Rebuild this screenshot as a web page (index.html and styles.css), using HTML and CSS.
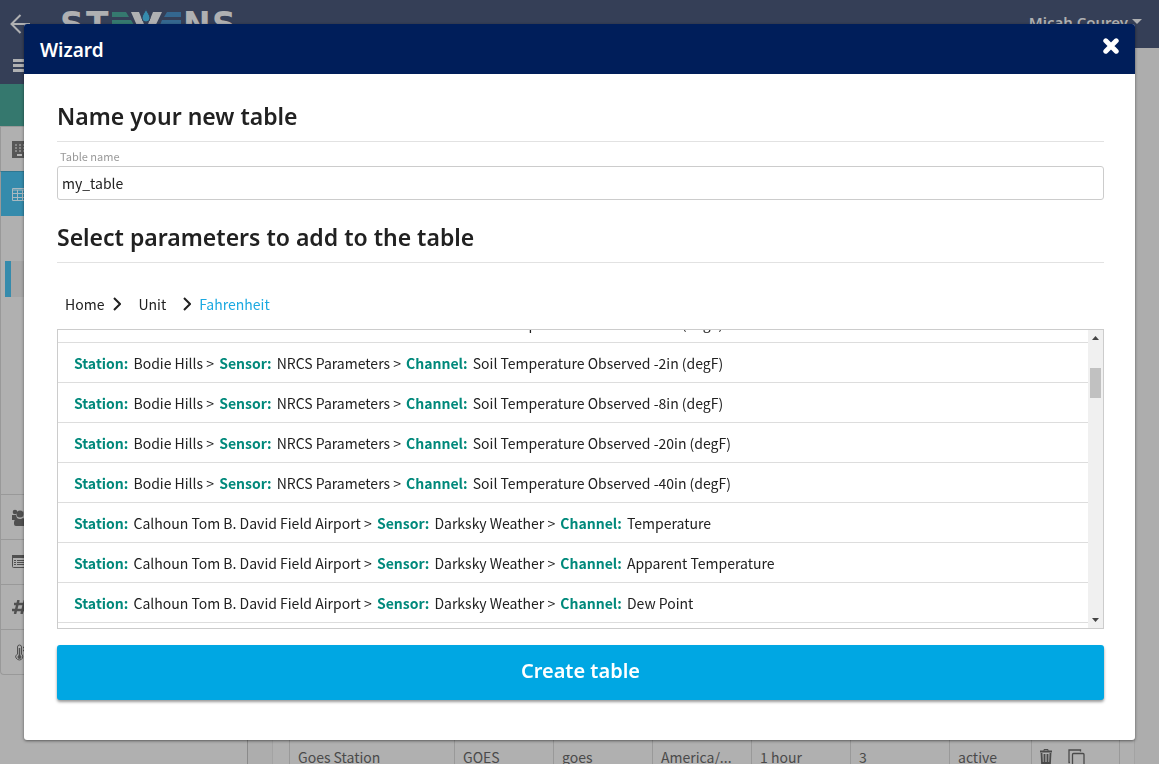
FILE: index.html
```html
<!DOCTYPE html>
<html lang="en">
<head>
<meta charset="utf-8">
<title>Wizard</title>
<link rel="stylesheet" href="styles.css">
</head>
<body>
<div class="app">
  <header class="topbar">
    <a class="back" href="#" aria-label="Back">
      <svg width="20" height="20" viewBox="0 0 20 20" fill="none" stroke="currentColor" stroke-width="2"><path d="M20 10H1M10.500 1L1.500 10l9 9"/></svg>
    </a>
    <svg class="logo" width="178" height="32" viewBox="0 0 178 32" role="img" aria-label="Stevens">
      <g class="logo-text">
        <text x="0" y="28">S</text><text x="26" y="28">T</text><text x="123" y="28">N</text><text x="152" y="28">S</text>
      </g>
      <path d="M71 4h8l7 17 7-17h9L90 29h-8z" fill="#afb0b2"/>
      <path d="M52 4h14l3 5H52zM52 12h19l3 5H52z" fill="#35796f"/>
      <path d="M107 4h14v5h-17zM102 12h19v5h-21z" fill="#34678f"/>
      <path d="M86 1c1 3 4 6 4 9a4 4 0 0 1-8 0c0-3 3-6 4-9z" fill="#358bad" stroke="#353f57" stroke-width="1"/>
    </svg>
    <button class="user" type="button">Micah Courey<svg width="10" height="6" viewBox="0 0 10 6"><path d="M0 0h10L5 5z" fill="currentColor"/></svg></button>
  </header>
  <div class="workspace">
    <nav class="sidebar" aria-label="Main">
      <button class="side-menu" type="button" aria-label="Menu"><svg width="17" height="14" viewBox="0 0 17 14"><path d="M0 0h17v3H0zM0 5h17v3H0zM0 10h17v3H0z" fill="currentColor"/></svg></button>
      <div class="side-title"></div>
      <a class="side-item" href="#" aria-label="Stations"><svg width="16" height="17" viewBox="0 0 16 17"><path d="M0 0h16v17H0z" fill="#575757"/><path d="M3 3h2v2H3zM7 3h2v2H7zM11 3h2v2h-2zM3 6h2v2H3zM7 6h2v2H7zM11 6h2v2h-2zM3 9h2v2H3zM7 9h2v2H7zM11 9h2v2h-2z" fill="#888"/><path d="M5 13h5v2H5z" fill="#b5b5b5"/></svg></a>
      <a class="side-item active" href="#" aria-label="Tables"><svg width="18" height="13" viewBox="0 0 18 13" fill="none" stroke="#a9b9c0"><path d="M.5.5h17v12H.5zM0 2h18M0 5.500h18M0 9.500h18M5.500 2v11M10.500 2v11M14.500 2v11"/></svg></a>
      <div class="submenu"><a class="sub-item" href="#" aria-label="Current table"></a></div>
      <a class="side-item" href="#" aria-label="Users"><svg width="20" height="17" viewBox="0 0 20 17" fill="#505050"><circle cx="3" cy="3" r="2.300"/><circle cx="8" cy="5" r="3.500"/><circle cx="14" cy="3" r="2.300"/><path d="M0 6h4l1 3-2 2H0zM12 6h5v4h-5zM2 13q1-4 3-4 3 2 6 0 3 1 3 4v2q0 2-2 2H4q-2 0-2-2z"/></svg></a>
      <a class="side-item" href="#" aria-label="Reports"><svg width="20" height="14" viewBox="0 0 20 14" fill="none" stroke="#505050"><rect x=".5" y=".5" width="19" height="12" rx="1"/><path d="M2 5.500h2M5 5.500h13M2 7.500h2M5 7.500h13M2 9.500h2M5 9.500h13"/><path d="M0 1.500h20" stroke-width="3"/></svg></a>
      <a class="side-item" href="#" aria-label="Channels"><svg width="16" height="14" viewBox="0 0 16 14" fill="none" stroke="#505050" stroke-width="2.500"><path d="M6.500 0L3 14M13 0L9.500 14M2 4h14M0 10h14"/></svg></a>
      <a class="side-item" href="#" aria-label="Temperature"><svg width="16" height="17" viewBox="-2 0 16 17" fill="none" stroke="#505050"><path d="M3.500 10V3q0-2 2-2t2 2v7q2 2 1 4t-3 2-3.500-2 1.500-4z"/><path d="M5.500 4v8M9 3.500h4M9 6.500h4" stroke-width="1.500"/><circle cx="5.500" cy="13" r="1.500" fill="#505050"/></svg></a>
    </nav>
    <main class="content">
      <div class="panel">
        <table class="stations">
          <colgroup><col class="c-name"><col class="c-mid"><col class="c-mid"><col class="c-mid"><col class="c-mid"><col class="c-mid"><col class="c-state"><col class="c-act"></colgroup>
          <tbody><tr>
            <td>Goes Station</td><td>GOES</td><td>goes</td><td>America/...</td><td>1 hour</td><td>3</td><td>active</td>
            <td><div class="actions">
              <button type="button" aria-label="Delete"><svg width="12" height="15" viewBox="0 0 12 15" fill="none" stroke="currentColor"><path d="M0 2.500h12" stroke-width="2"/><path d="M4 2V.5h4V2"/><path d="M1.500 4l.5 10h8l.5-10M4.500 5v8M7.500 5v8" stroke-width="1.800"/></svg></button>
              <button type="button" aria-label="Copy"><svg width="17" height="18" viewBox="0 0 17 18" fill="none" stroke="currentColor" stroke-width="1.300"><rect x="4.500" y="4.500" width="11.500" height="13" rx="1"/><path d="M2 13.500H1V1h11.500v1.500"/></svg></button>
            </div></td>
          </tr></tbody>
        </table>
      </div>
    </main>
  </div>
</div>

<section class="modal" role="dialog" aria-modal="true" aria-labelledby="modal-title">
  <header class="modal-head">
    <h1 id="modal-title">Wizard</h1>
    <button class="close" type="button" aria-label="Close"><svg width="16" height="16" viewBox="0 0 16 16" stroke="currentColor" stroke-width="5" stroke-linecap="round"><path d="M2.800 2.800l10.400 10.400M13.200 2.800L2.800 13.200"/></svg></button>
  </header>
  <form class="modal-body">
    <h2>Name your new table</h2>
    <label for="table-name">Table name</label>
    <input id="table-name" type="text" value="my_table">
    <h2 class="second">Select parameters to add to the table</h2>
    <nav class="crumbs" aria-label="Breadcrumb">
      <a class="crumb-home" href="#">Home</a>
      <svg width="8" height="14" viewBox="0 0 8 14"><path d="M1 1l6 6-6 6"/></svg>
      <a class="crumb-unit" href="#">Unit</a>
      <svg width="8" height="14" viewBox="0 0 8 14"><path d="M1 1l6 6-6 6"/></svg>
      <a class="crumb-current" href="#" aria-current="page">Fahrenheit</a>
    </nav>
    <div class="picker">
      <ul class="params" id="params">
        <li><b>Station:</b> Bodie Hills &gt; <b>Sensor:</b> NRCS Parameters &gt; <b>Channel:</b> Soil Temperature Observed -4in (degF)</li>
        <li><b>Station:</b> Bodie Hills &gt; <b>Sensor:</b> NRCS Parameters &gt; <b>Channel:</b> Soil Temperature Observed -2in (degF)</li>
        <li><b>Station:</b> Bodie Hills &gt; <b>Sensor:</b> NRCS Parameters &gt; <b>Channel:</b> Soil Temperature Observed -8in (degF)</li>
        <li><b>Station:</b> Bodie Hills &gt; <b>Sensor:</b> NRCS Parameters &gt; <b>Channel:</b> Soil Temperature Observed -20in (degF)</li>
        <li><b>Station:</b> Bodie Hills &gt; <b>Sensor:</b> NRCS Parameters &gt; <b>Channel:</b> Soil Temperature Observed -40in (degF)</li>
        <li><b>Station:</b> Calhoun Tom B. David Field Airport &gt; <b>Sensor:</b> Darksky Weather &gt; <b>Channel:</b> Temperature</li>
        <li><b>Station:</b> Calhoun Tom B. David Field Airport &gt; <b>Sensor:</b> Darksky Weather &gt; <b>Channel:</b> Apparent Temperature</li>
        <li><b>Station:</b> Calhoun Tom B. David Field Airport &gt; <b>Sensor:</b> Darksky Weather &gt; <b>Channel:</b> Dew Point</li>
        <li></li>
      </ul>
      <div class="scrollbar" aria-hidden="true">
        <svg width="7" height="4" viewBox="0 0 7 4"><path d="M3.500 0L7 4H0z"/></svg>
        <div class="track"><div class="thumb"></div></div>
        <svg width="7" height="4" viewBox="0 0 7 4"><path d="M3.500 4L7 0H0z"/></svg>
      </div>
    </div>
    <button class="create" type="button">Create table</button>
  </form>
</section>
<script src="script.js"></script>
</body>
</html>
```
FILE: styles.css
```css
* { box-sizing: border-box; }
body {
  margin: 0;
  overflow: hidden;
  background: #adadad;
  color: #212121;
  font: 14px/20px "Noto Sans CJK SC", "Open Sans", sans-serif;
}
button { border: 0; background: none; padding: 0; font: inherit; color: inherit; }
a { color: inherit; text-decoration: none; }
h1, h2, .user, .create { font-family: "Noto Sans", "Open Sans", sans-serif; font-weight: 600; }
svg { display: block; flex: none; }

.app { display: flex; flex-direction: column; height: 100vh; }
.topbar {
  display: flex;
  align-items: flex-start;
  flex: none;
  height: 48px;
  padding: 0 17px 0 10px;
  background: #353f57;
  color: #afb0b2;
}
.back { padding-top: 14px; }
.logo { margin: 8px 0 0 30px; }
.logo-text { font: bold 33px "DejaVu Sans", sans-serif; fill: #afb0b2; }
.user { display: flex; align-items: center; gap: 4px; margin: 12px 0 0 auto; font-size: 15px; line-height: 20px; }

.workspace { display: flex; flex: 1; min-height: 0; }
.sidebar { flex: none; width: 248px; border-right: 1px solid #8a8a8a; background: #b0b0b0; }
.side-menu { display: flex; align-items: center; width: 100%; height: 36px; padding: 0 13px; background: #353f57; color: #afb0b2; }
.side-title { height: 42px; background: #35786e; }
.side-item {
  display: flex;
  align-items: center;
  height: 45px;
  padding-left: 11px;
  border: solid #999;
  border-width: 1px 0 0 1px;
}
.side-item:last-child { height: 46px; border-bottom-width: 1px; border-bottom-left-radius: 4px; }
.side-item.active { border-top-color: #2f7791; background: #358bac; }
.submenu { height: 278px; padding: 45px 0 0 4px; border-left: 1px solid #999; }
.sub-item { display: block; height: 36px; border-left: 6px solid #358bac; background: #a6a6a6; }

.content { display: flex; flex: 1; align-items: flex-end; min-width: 0; padding: 0 24px; overflow: hidden; background: #adadad; }
.panel { flex: 1; min-width: 0; margin-bottom: -4px; padding: 0 18px 0 16px; border: solid #a3a3a3; border-width: 0 1px; background: #b0b0b0; }
.stations { width: 100%; table-layout: fixed; border-collapse: collapse; color: #4a4a4a; }
.stations td { padding: 7px 8px 1px; border: solid #999; border-width: 1px 1px 0; overflow: hidden; white-space: nowrap; }
.c-name { width: 165px; }
.c-mid { width: 99px; }
.c-state { width: 82px; }
.c-act { width: 88px; }
.actions { display: flex; align-items: flex-start; gap: 16px; height: 20px; padding-top: 2px; }

.modal {
  position: fixed;
  inset: 24px;
  display: flex;
  flex-direction: column;
  overflow: hidden;
  border-radius: 3px;
  background: #fff;
  box-shadow: 0 1px 3px rgba(0, 0, 0, .5);
}
.modal-head {
  display: flex;
  align-items: center;
  justify-content: space-between;
  flex: none;
  height: 50px;
  padding: 0 16px;
  background: #001e5a;
  color: #fff;
}
h1 { margin: 0; padding-top: 2px; font-size: 19px; line-height: 24px; }
.close { padding-bottom: 6px; }
.modal-body { display: flex; flex-direction: column; flex: 1; min-height: 0; padding: 26px 31px 40px 33px; }
h2 { margin: 0 0 6px; padding-bottom: 9px; border-bottom: 1px solid #e2e2e2; font-size: 23px; line-height: 32px; }
h2.second { margin: 21px 0 0; }
label { padding: 0 0 1px 3px; color: #999; font-size: 11px; line-height: 17px; }
input { width: 100%; height: 34px; padding: 0 4px; border: 1px solid #ccc; border-radius: 3px; background: #fff; color: inherit; font: inherit; }
.crumbs { display: flex; align-items: center; padding: 31px 8px 15px; }
.crumbs svg { fill: none; stroke: #212121; stroke-width: 2; }
.crumb-home { margin-right: 9px; }
.crumb-unit { margin: 0 17px; }
.crumb-current { margin-left: 8px; color: #1ba9e1; }
.picker { display: flex; flex: 1; min-height: 0; border: 1px solid #ccc; }
.params { flex: 1; margin: 0; padding: 0; overflow-y: auto; scrollbar-width: none; list-style: none; }
.params li { height: 40px; padding: 10px 16px 9px; border-bottom: 1px solid #ddd; white-space: nowrap; }
.params b { margin: 0 2px; color: #00897b; }
.params b:first-child { margin-left: 0; }
.scrollbar { display: flex; flex-direction: column; align-items: center; width: 15px; padding: 6px 2px; background: #f0f0f0; fill: #444; }
.track { flex: 1; width: 100%; padding-top: 28px; }
.thumb { height: 30px; background: #c1c1c1; }
.create { flex: none; height: 55px; margin-top: 16px; padding-bottom: 3px; border-radius: 3px; background: #00a7e3; color: #fff; font-size: 20px; box-shadow: 0 2px 3px rgba(0, 0, 0, .4); }
```
FILE: script.js
```js
document.getElementById("params").scrollTop = 27;
```
